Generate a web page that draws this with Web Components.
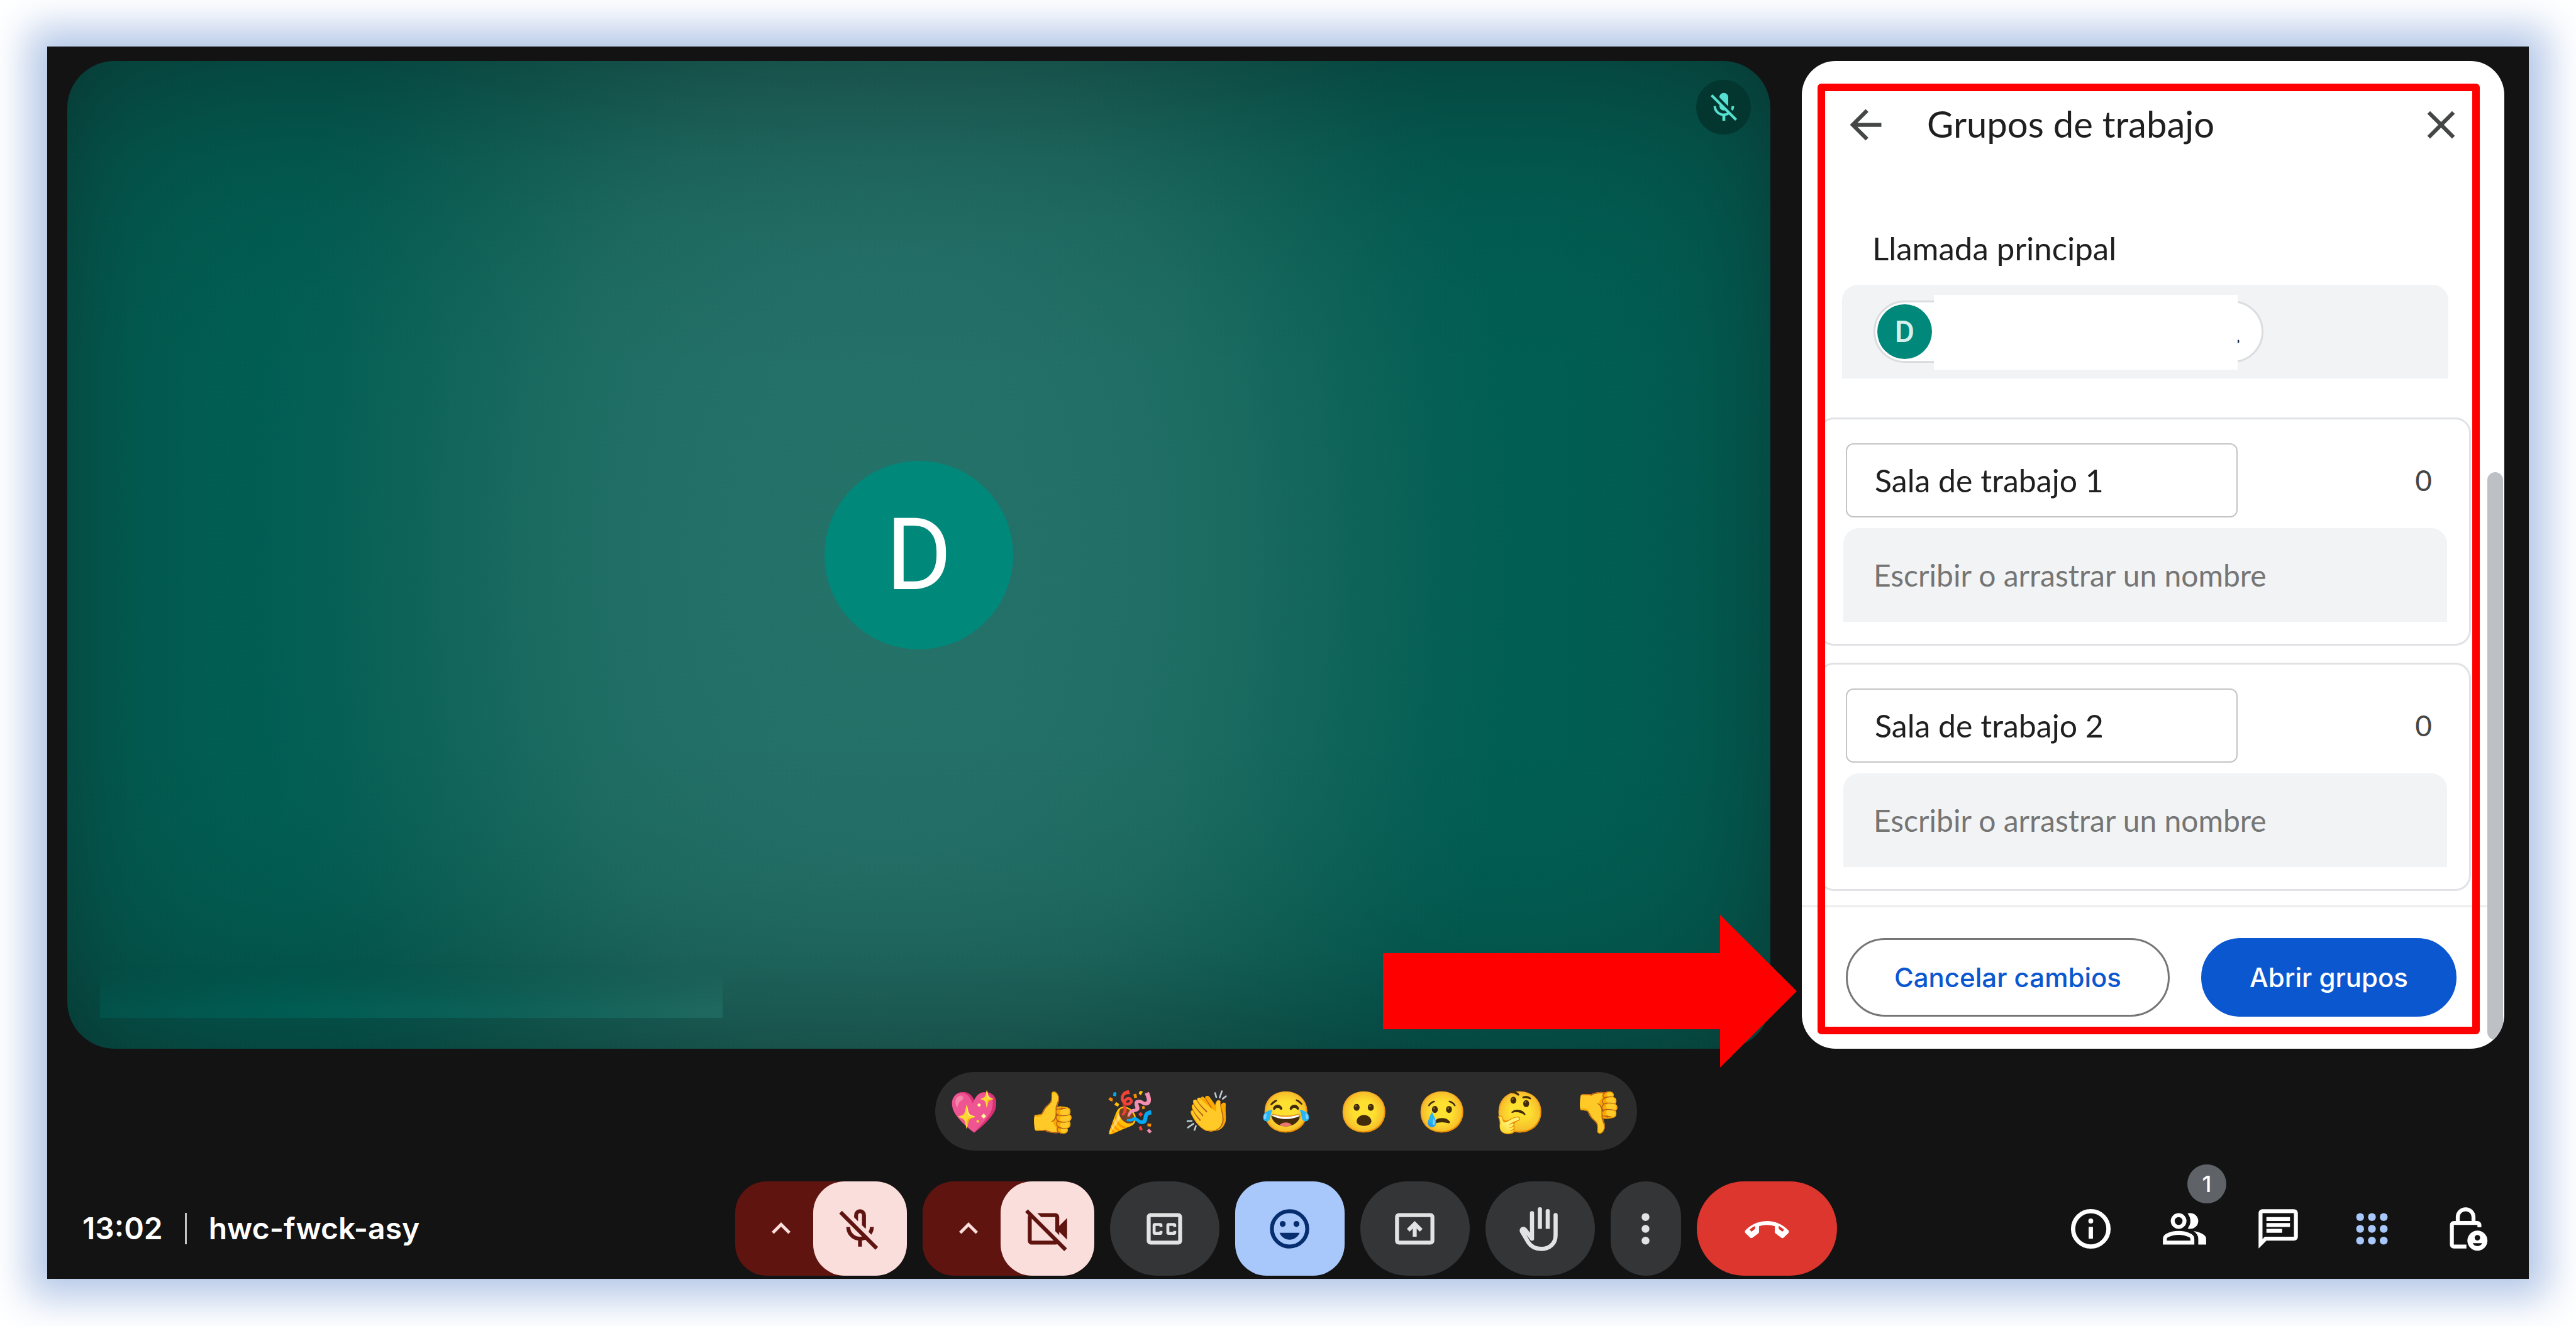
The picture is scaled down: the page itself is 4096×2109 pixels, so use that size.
<!DOCTYPE html>
<html lang="es">
<head>
<meta charset="utf-8">
<title>hwc-fwck-asy</title>
<style>
  body {
    margin: 0;
    min-height: 100vh;
    display: flex;
    background: #fff;
    font-family: Inter, Roboto, "Liberation Sans", sans-serif;
  }
</style>
</head>
<body>
<meet-window></meet-window>

<script>
const BASE = `
  *, *::before, *::after { box-sizing: border-box; }
  :host([hidden]) { display: none; }
  button, input { font: inherit; margin: 0; }
  button { border: 0; padding: 0; background: none; color: inherit; cursor: pointer;
           display: flex; align-items: center; justify-content: center; }
`;

function define(name, css, html) {
  const template = document.createElement('template');
  template.innerHTML = `<style>${BASE}${css}</style>${typeof html === 'string' ? html : ''}`;
  customElements.define(name, class extends HTMLElement {
    connectedCallback() {
      if (this.shadowRoot) return;
      const root = this.attachShadow({ mode: 'open' });
      root.append(template.content.cloneNode(true));
      if (typeof html === 'function') root.innerHTML += html(this);
    }
  });
}

/* ---- icons: 24-unit grid, or the 960-unit one for the newer glyphs ---- */
const ICONS = {
  back: '<path d="M20 11H7.83l5.59-5.59L12 4l-8 8 8 8 1.41-1.41L7.83 13H20v-2z"/>',
  close: '<path d="M19 6.41L17.59 5 12 10.59 6.41 5 5 6.41 10.59 12 5 17.59 6.41 19 12 13.41 17.59 19 19 17.59 13.41 12z"/>',
  up: '<path d="M12 8l-6 6 1.41 1.41L12 10.83l4.59 4.58L18 14z"/>',
  muted: '<path d="M19 11h-1.7c0 .74-.16 1.43-.43 2.05l1.23 1.23c.56-.98.9-2.09.9-3.28zm-4.02.17c0-.06.02-.11.02-.17V5c0-1.66-1.34-3-3-3S9 3.34 9 5v.18l5.98 5.99zM4.27 3L3 4.27l6.01 6.01V11c0 1.66 1.33 3 2.99 3 .22 0 .44-.03.65-.08l1.66 1.66c-.71.33-1.5.52-2.31.52-2.76 0-5.3-2.1-5.3-5.1H5c0 3.41 2.72 6.23 6 6.72V21h2v-3.28c.91-.13 1.77-.45 2.54-.9L19.73 21 21 19.73 4.27 3z"/>',
  cc: '<path d="M19 4H5c-1.11 0-2 .9-2 2v12c0 1.1.89 2 2 2h14c1.1 0 2-.9 2-2V6c0-1.1-.9-2-2-2zm0 14H5V6h14v12zM7 15h3c.55 0 1-.45 1-1v-1H9.5v.5h-2v-3h2v.5H11v-1c0-.55-.45-1-1-1H7c-.55 0-1 .45-1 1v4c0 .55.45 1 1 1zm7 0h3c.55 0 1-.45 1-1v-1h-1.5v.5h-2v-3h2v.5H18v-1c0-.55-.45-1-1-1h-3c-.55 0-1 .45-1 1v4c0 .55.45 1 1 1z"/>',
  mood: '<circle cx="12" cy="12" r="9" fill="none" stroke="currentColor" stroke-width="2"/><circle cx="8.5" cy="9.5" r="1.5"/><circle cx="15.5" cy="9.5" r="1.5"/><path d="M12 17.5c2.33 0 4.31-1.46 5.11-3.5H6.89c.8 2.04 2.78 3.5 5.11 3.5z"/>',
  present: '<path d="M20 4H4c-1.1 0-2 .9-2 2v12c0 1.1.9 2 2 2h16c1.1 0 2-.9 2-2V6c0-1.1-.9-2-2-2zm0 14H4V6h16v12z"/><path d="M12 8l-4 4 1.41 1.41L11 11.83V16h2v-4.17l1.59 1.58L16 12z"/>',
  hand: '<path fill="none" stroke="currentColor" stroke-width="2.1" stroke-linecap="round" stroke-linejoin="round" d="M8 4v13L4.400 12.400a.9.9 0 0 0-1.600.8L6.200 19C7.700 21.200 9.900 22.200 12.800 22.200 17 22.200 20 19.500 20 15.200V5"/><path fill="none" stroke="currentColor" stroke-width="2.1" d="M12 2v10M16 3v9"/><circle cx="12" cy="2" r="1.05"/><circle cx="16" cy="3" r="1.05"/>',
  more: '<circle cx="12" cy="6" r="2"/><circle cx="12" cy="12" r="2"/><circle cx="12" cy="18" r="2"/>',
  info: '<circle cx="12" cy="12" r="9" fill="none" stroke="currentColor" stroke-width="2.2"/><circle cx="12" cy="8" r="1.25"/><path d="M10.900 11h2.200v6h-2.200z"/>',
  chat: '<path d="M4 4h16v12H5.17L4 17.17V4m0-2c-1.1 0-1.99.9-1.99 2L2 22l4-4h14c1.1 0 2-.9 2-2V4c0-1.1-.9-2-2-2H4zm2 10h8v2H6v-2zm0-3h12v2H6V9zm0-3h12v2H6V6z"/>',
  apps: [6, 12, 18].flatMap(y => [6, 12, 18].map(x => `<circle cx="${x}" cy="${y}" r="2"/>`)).join(''),
  lock: '<path fill="none" stroke="currentColor" stroke-width="2" d="M12.400 21H6a1 1 0 0 1-1-1V10a1 1 0 0 1 1-1h12a1 1 0 0 1 1 1v1.200M8 9V6a4 4 0 0 1 8 0v3"/><circle cx="18" cy="18" r="5.1"/><circle cx="18" cy="16.500" r="1.400" fill="#131314"/><path d="M15.600 19.300h4.800c-.4.9-1.300 1.500-2.400 1.500s-2-.6-2.400-1.500z" fill="#131314"/>',
  micOff: ['m710-362-58-58q14-23 21-48t7-52h80q0 44-13 83.5T710-362ZM592-482l-72-72v-206q0-17-11.500-28.500T480-800q-17 0-28.500 11.500T440-760v126l-80-80v-46q0-50 35-85t85-35q50 0 85 35t35 85v240q0 11-2.500 20t-5.500 18ZM440-120v-123q-104-14-172-93t-68-184h80q0 83 57.500 141.500T480-320q34 0 64.500-10.500T600-360l57 57q-29 23-63.500 39T520-243v123h-80Zm352 64L56-792l56-56 736 736-56 56Z'],
  camOff: ['M880-260 720-420v67l-80-80v-287H353l-80-80h367q33 0 56.500 23.500T720-720v180l160-160v440ZM822-26 26-822l56-56L878-82l-56 56ZM160-800l80 80h-80v480h480v-80l80 80q0 33-23.500 56.500T640-160H160q-33 0-56.500-23.500T80-240v-480q0-33 23.500-56.500T160-800Z'],
  hangup: ['M480-640q118 0 232.500 47.500T916-450q12 12 12 28t-12 28l-92 90q-11 11-25.500 12t-26.500-8l-116-88q-8-6-12-14t-4-18v-114q-38-12-78-19t-82-7q-42 0-82 7t-78 19v114q0 10-4 18t-12 14l-116 88q-12 9-26.500 8T136-304l-92-90q-12-12-12-28t12-28q88-95 203-142.500T480-640Zm-240 98q-29 15-56 34.500T128-464l40 40 72-56v-62Zm480 2v60l72 56 40-38q-29-26-56-45t-56-33Z'],
  people: ['M40-160v-112q0-34 17.500-62.500T104-378q62-31 126-46.500T360-440q66 0 130 15.500T616-378q29 15 46.500 43.500T680-272v112H40Zm720 0v-120q0-44-24.500-84.500T666-434q51 6 96 20.500t84 35.500q36 20 55 44.500t19 53.500v120H760ZM360-480q-66 0-113-47t-47-113q0-66 47-113t113-47q66 0 113 47t47 113q0 66-47 113t-113 47Zm400-160q0 66-47 113t-113 47q-11 0-28-2.500t-28-5.500q27-32 41.500-71t14.500-81q0-42-14.500-81T544-792q14-5 28-6.500t28-1.500q66 0 113 47t47 113ZM120-240h480v-32q0-11-5.500-20T580-306q-54-27-109-40.500T360-360q-56 0-111 13.500T140-306q-9 5-14.500 14t-5.500 20v32Zm240-320q33 0 56.500-23.500T440-640q0-33-23.500-56.500T360-720q-33 0-56.500 23.500T280-640q0 33 23.500 56.500T360-560Z']
};

define('meet-icon', `
  :host { display: block; width: 75px; height: 75px; flex: none; }
  svg { display: block; width: 100%; height: 100%; fill: currentColor; }
`, host => {
  const art = ICONS[host.getAttribute('name')];
  return Array.isArray(art)
    ? `<svg viewBox="0 -960 960 960" aria-hidden="true"><path d="${art[0]}"/></svg>`
    : `<svg viewBox="0 0 24 24" aria-hidden="true">${art}</svg>`;
});

/* ---- avatar: initial on a teal disc ---- */
define('user-avatar', `
  :host { display: grid; place-items: center; border-radius: 50%; background: #00897b; color: #fff;
          font-family: Roboto, sans-serif; width: 300px; height: 300px; font-size: 160px; line-height: 1; flex: none; }
  :host([small]) { width: 87px; height: 87px; font-size: 48px; font-weight: 500; color: #d5efec; }
`, '<slot></slot>');

/* ---- main video tile ---- */
define('video-tile', `
  :host {
    --v: 14, 26, 26;
    display: grid; overflow: hidden; border-radius: 75px;
    background:
      linear-gradient(rgba(var(--v), .32), rgba(var(--v), .21) 5%, rgba(var(--v), .12) 10%, rgba(var(--v), .06) 16%, rgba(var(--v), .02) 23%, transparent 32%, transparent 68%, rgba(var(--v), .02) 77%, rgba(var(--v), .06) 84%, rgba(var(--v), .12) 90%, rgba(var(--v), .21) 95%, rgba(var(--v), .32)),
      linear-gradient(90deg, rgba(var(--v), .27), rgba(var(--v), .16) 2%, rgba(var(--v), .09) 4%, rgba(var(--v), .04) 7%, rgba(var(--v), .01) 10%, transparent 14%, transparent 86%, rgba(var(--v), .01) 90%, rgba(var(--v), .04) 93%, rgba(var(--v), .09) 96%, rgba(var(--v), .16) 98%, rgba(var(--v), .27)),
      radial-gradient(ellipse 37% 100% at 48% 50%, #257269, #237068 30%, #1d6c62 52%, #0f6459 74%, #055f55 90%, #015e53);
  }
  ::slotted(*) , .mute, .plate { grid-area: 1 / 1; }
  ::slotted(user-avatar) { place-self: center; }
  .mute { place-self: start end; margin: 30px 31px; width: 87px; height: 87px; border-radius: 50%;
          background: #02362f; color: #56e0d2; display: grid; place-items: center; }
  .mute meet-icon { width: 56px; height: 56px; }
  .plate { place-self: end start; margin: 0 0 49px 52px; width: 990px; height: 86px;
           background: linear-gradient(90deg, #03524a, #005c52 30%, #0b5f56 60%, #1f685f);
           -webkit-mask-image: linear-gradient(transparent, #000 80%);
           mask-image: linear-gradient(transparent, #000 80%); }
`, `
  <slot></slot>
  <div class="mute"><meet-icon name="muted"></meet-icon></div>
  <div class="plate"></div>
`);

/* ---- participant chip ---- */
define('person-chip', `
  :host { display: flex; align-items: center; position: relative; width: 620px; border: 3px solid #dadce0;
          border-radius: 50px; padding: 3px; background: #fff; color: #1f1f1f; font-size: 48px; line-height: 64px; }
  .name { margin-left: auto; margin-right: 30px; }
  .cover { position: absolute; left: 93px; width: 483px; top: -12px; bottom: -14px; background: #fff; }
`, `
  <user-avatar small><slot></slot></user-avatar>
  <span class="name">.</span>
  <span class="cover"></span>
`);

/* ---- breakout room card ---- */
define('room-card', `
  :host { display: flex; flex-direction: column; gap: 17px; border: 3px solid #e1e2e5; border-radius: 25px;
          padding: 38px 35px 35px 37px; }
  .top { display: flex; align-items: center; justify-content: space-between; padding: 0 24px 0 4px; }
  .room { width: 623px; height: 118px; padding: 0 44px; border: 2px solid #c4c4c4; border-radius: 12px;
          background: #fff; color: #1f1f1f; font-size: 50px; outline: 0; }
  .count { color: #444746; font-size: 46px; line-height: 64px; }
  .people { width: 100%; height: 149px; padding: 0 48px; border: 0; border-radius: 25px 25px 0 0;
            background: #f1f3f4; color: #1f1f1f; font-size: 48px; outline: 0; }
  .people::placeholder { color: #757575; opacity: 1; }
`, host => `
  <div class="top">
    <input class="room" type="text" aria-label="Nombre de la sala" value="${host.getAttribute('name')}">
    <span class="count"><slot></slot></span>
  </div>
  <input class="people" type="text" aria-label="Participantes" placeholder="Escribir o arrastrar un nombre">
`);

/* ---- side panel ---- */
define('groups-panel', `
  :host { display: flex; position: relative; width: 1117px; flex: none; font-family: Lato, "Open Sans", sans-serif; }
  .sheet { flex: 1; display: flex; overflow: hidden; border-radius: 54px; background: #fff; color: #1f1f1f; }
  .content { flex: 1; min-width: 0; display: flex; flex-direction: column; }
  header { display: flex; align-items: center; height: 203px; padding: 0 36px 0 64px; color: #444746; }
  h1 { margin: 0; padding: 0 0 4px 60px; flex: 1; color: #1f1f1f; font-size: 58px; font-weight: 400; line-height: 72px; }
  h2 { margin: 0 0 26px; padding: 0 48px; font-size: 51px; font-weight: 400; line-height: 64px; }
  .main { padding: 63px 62px 62px 64px; }
  .drop { display: flex; padding: 25px 50px; border-radius: 25px 25px 0 0; background: #f1f3f4; }
  .rooms { flex: 1; display: flex; flex-direction: column; gap: 27px; padding: 0 26px 23px; }
  footer { display: flex; justify-content: flex-end; gap: 50px; padding: 49px 49px 51px; border-top: 3px solid #ededed; }
  footer button { height: 125px; padding: 0 74px; border: 3px solid #0b57d0; border-radius: 63px;
                  font-family: Inter, Roboto, sans-serif;
                  font-size: 42px; font-weight: 500; line-height: 56px; white-space: nowrap; }
  .cancel { border-color: #747775; color: #0b57d0; }
  .open { background: #0b57d0; color: #fff; }
  .track { width: 27px; padding: 654px 2px 14px 0; display: flex; }
  .thumb { flex: 1; border-radius: 13px; background: #bdc1c6; }
  .frame { position: absolute; inset: 36px 39px 23px 25px; border: 12px solid #f00; border-radius: 6px; pointer-events: none; }
  .arrow { position: absolute; right: calc(100% + 8px); bottom: -30px; width: 658px; height: 243px; pointer-events: none; }
`, `
  <div class="sheet">
    <div class="content">
      <header>
        <button aria-label="Atrás"><meet-icon name="back"></meet-icon></button>
        <h1>Grupos de trabajo</h1>
        <button aria-label="Cerrar"><meet-icon name="close"></meet-icon></button>
      </header>
      <section class="main">
        <h2>Llamada principal</h2>
        <div class="drop"><person-chip>D</person-chip></div>
      </section>
      <section class="rooms">
        <room-card name="Sala de trabajo 1">0</room-card>
        <room-card name="Sala de trabajo 2">0</room-card>
      </section>
      <footer>
        <button class="cancel">Cancelar cambios</button>
        <button class="open">Abrir grupos</button>
      </footer>
    </div>
    <div class="track"><div class="thumb"></div></div>
  </div>
  <div class="frame"></div>
  <svg class="arrow" viewBox="0 0 658 243" aria-hidden="true"><path fill="#f00" d="M0 61h536V0l122 121.500L536 243v-61H0z"/></svg>
`);

/* ---- emoji reactions ---- */
define('reaction-bar', `
  :host { display: flex; align-self: center; border-radius: 63px; background: #2c2c2c; }
  button { width: 124px; height: 125px; font-size: 64px; line-height: 75px; }
`, '💖 👍 🎉 👏 😂 😮 😢 🤔 👎'.split(' ').map(e => `<button>${e}</button>`).join(''));

/* ---- call controls ---- */
define('tool-button', `
  :host { display: block; flex: none; }
  button { width: 174px; height: 150px; border-radius: 75px; background: #333537; color: #e3e3e3; }
  :host([kind="active"]) button { border-radius: 50px; background: #a8c7fa; color: #062e6f; }
  :host([kind="narrow"]) button { width: 112px; }
  :host([kind="end"]) button { width: 223px; background: #dc362e; color: #fff; }
`, host => `<button aria-label="${host.getAttribute('label')}"><meet-icon name="${host.getAttribute('icon')}"></meet-icon></button>`);

define('device-button', `
  :host { display: flex; flex: none; border-radius: 50px; background: #601410; }
  .menu { width: 124px; padding-left: 22px; color: #f9dedc; }
  .menu meet-icon { width: 60px; height: 60px; }
  .toggle { width: 149px; height: 150px; border-radius: 50px; background: #f9dedc; color: #601410; }
`, host => `
  <button class="menu" aria-label="Más opciones"><meet-icon name="up"></meet-icon></button>
  <button class="toggle" aria-label="${host.getAttribute('label')}"><meet-icon name="${host.getAttribute('icon')}"></meet-icon></button>
`);

define('side-button', `
  :host { display: block; position: relative; color: #fff; }
  :host([on]) { color: #a8c7fa; }
  button { width: 149px; height: 150px; }
  .badge { position: absolute; left: 79px; top: -27px; width: 62px; height: 62px; border-radius: 50%;
           background: #5f6368; color: #fff; font-size: 36px; font-weight: 500; line-height: 62px; text-align: center; }
`, host => `
  <button aria-label="${host.getAttribute('label')}"><meet-icon name="${host.getAttribute('icon')}"></meet-icon></button>
  ${host.hasAttribute('count') ? `<span class="badge">${host.getAttribute('count')}</span>` : ''}
`);

define('call-toolbar', `
  :host { display: grid; grid-template-columns: 1fr auto 1fr; align-items: center; }
  .meta { display: flex; align-items: center; gap: 35px; margin-left: 24px; color: #fff;
          font-size: 48px; font-weight: 600; line-height: 64px; white-space: nowrap; }
  .rule { width: 3px; height: 50px; background: #c4c7c5; }
  .controls { display: flex; gap: 25px; }
  .side { display: flex; justify-content: flex-end; margin-right: -13px; }
`, `
  <div class="meta"><span>13:02</span><span class="rule"></span><span>hwc-fwck-asy</span></div>
  <div class="controls">
    <device-button icon="micOff" label="Activar micrófono"></device-button>
    <device-button icon="camOff" label="Activar cámara"></device-button>
    <tool-button icon="cc" label="Subtítulos"></tool-button>
    <tool-button icon="mood" kind="active" label="Reacciones"></tool-button>
    <tool-button icon="present" label="Presentar ahora"></tool-button>
    <tool-button icon="hand" label="Levantar la mano"></tool-button>
    <tool-button icon="more" kind="narrow" label="Más opciones"></tool-button>
    <tool-button icon="hangup" kind="end" label="Abandonar la llamada"></tool-button>
  </div>
  <div class="side">
    <side-button icon="info" label="Detalles"></side-button>
    <side-button icon="people" count="1" label="Personas"></side-button>
    <side-button icon="chat" label="Chat"></side-button>
    <side-button icon="apps" on label="Actividades"></side-button>
    <side-button icon="lock" label="Controles del organizador"></side-button>
  </div>
`);

/* ---- the window itself, with its soft blue glow ---- */
define('meet-window', `
  :host { flex: 1; display: flex; flex-direction: column; margin: 74px 75px 75px;
          padding: 23px 39px 5px 32px; background: #131314; box-shadow: 0 0 58px 30px #b4c7e7; }
  .stage { flex: 1; display: flex; gap: 50px; margin-bottom: 37px; }
  video-tile { flex: 1; }
  reaction-bar { margin-bottom: 49px; }
`, `
  <div class="stage">
    <video-tile><user-avatar>D</user-avatar></video-tile>
    <groups-panel></groups-panel>
  </div>
  <reaction-bar></reaction-bar>
  <call-toolbar></call-toolbar>
`);
</script>
</body>
</html>
